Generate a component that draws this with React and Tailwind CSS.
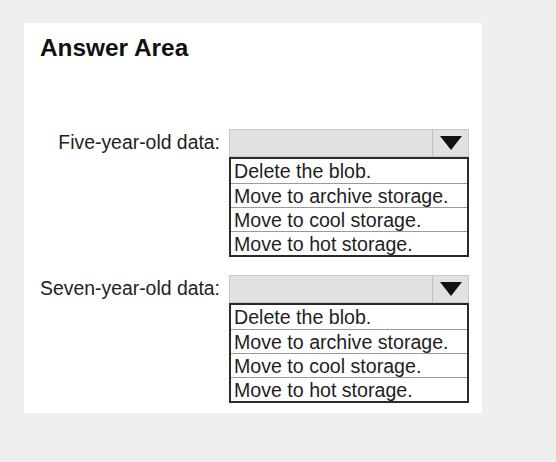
import React from "react";

const options = [
  "Delete the blob.",
  "Move to archive storage.",
  "Move to cool storage.",
  "Move to hot storage.",
];

function Dropdown() {
  return (
    <div className="w-[240px]">
      {/* closed select box */}
      <div className="flex h-[28px] border border-[#c9c9c9] bg-[#e1e1e1]">
        <div className="flex-1" />
        <div className="flex w-[36px] items-center justify-center border-l border-[#bfbfbf]">
          <svg width="22" height="14" viewBox="0 0 22 14">
            <polygon points="0,0 22,0 11,14" fill="#111" />
          </svg>
        </div>
      </div>
      {/* options list */}
      <div className="border-2 border-[#2a2a2a] bg-white">
        {options.map((opt, i) => (
          <div
            key={opt}
            className={
              "h-[24px] pl-[3px] text-[19.6px] leading-[24px] text-[#1e1e1e] " +
              (i > 0 ? "border-t border-[#9a9a9a]" : "")
            }
          >
            {opt}
          </div>
        ))}
      </div>
    </div>
  );
}

function Row({ label, className }) {
  return (
    <div className={"flex items-start gap-[9px] " + (className || "")}>
      <div className="flex h-[28px] w-[180px] items-center justify-end text-[19.4px] text-[#222]">
        {label}
      </div>
      <Dropdown />
    </div>
  );
}

export default function App() {
  return (
    <div
      className="min-h-screen bg-[#efefef] pl-[24px] pt-[23px]"
      style={{ fontFamily: '"Liberation Sans", Arial, sans-serif' }}
    >
      <div className="h-[390px] w-[458px] bg-white pl-4 pt-[13px]">
        <h1 className="h-6 text-[24.4px] font-bold leading-6 text-[#111]">
          Answer Area
        </h1>
        <Row label="Five-year-old data:" className="mt-[69px]" />
        <Row label="Seven-year-old data:" className="mt-[18px]" />
      </div>
    </div>
  );
}
